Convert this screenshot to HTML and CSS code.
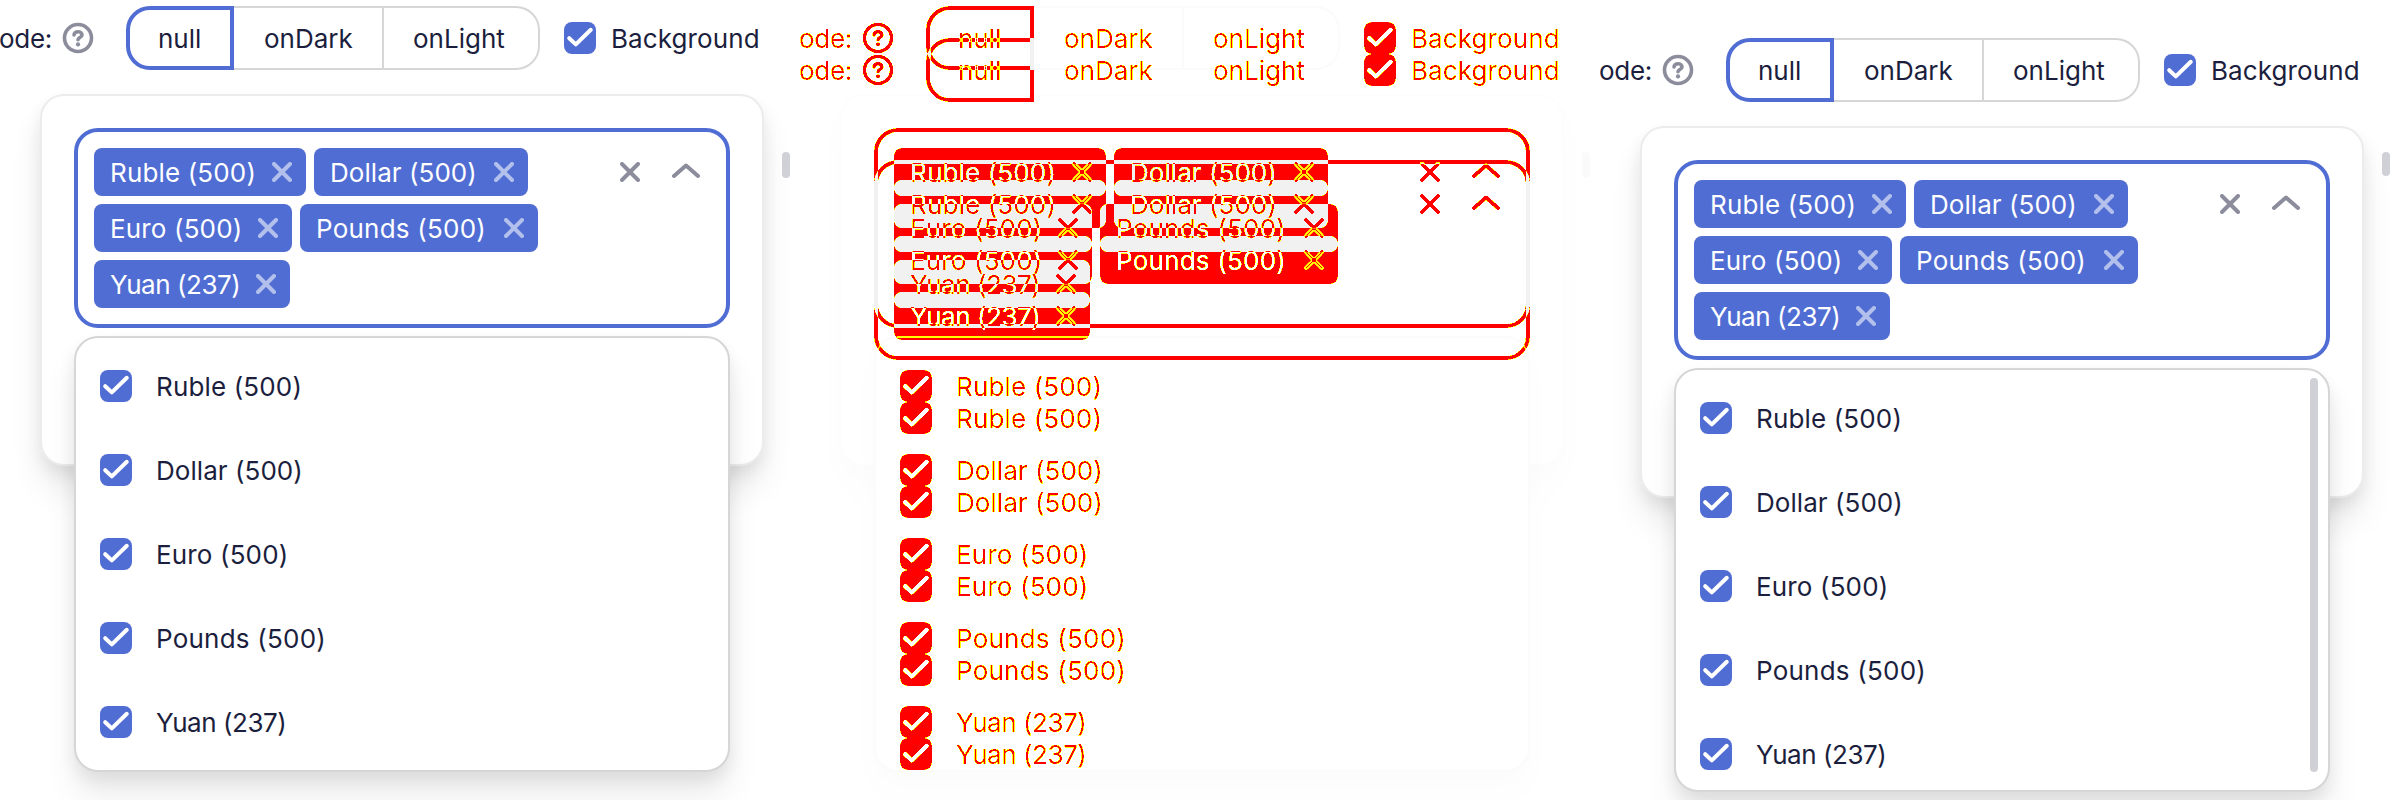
FILE: index.html
```html
<!DOCTYPE html>
<html lang="en">
<head>
<meta charset="utf-8">
<title>Select comparison</title>
<link rel="stylesheet" href="styles.css">
</head>
<body>
<svg class="defs" width="0" height="0" aria-hidden="true">
  <filter id="diff" color-interpolation-filters="sRGB" x="0" y="0" width="100%" height="100%">
    <feColorMatrix in="SourceGraphic" type="matrix" values="0 0 0 0 0  0 0 0 0 0  0 0 0 0 0  .6 .35 .05 0 0" result="level"/>
    <feComponentTransfer in="level" result="mask">
      <feFuncA type="discrete" tableValues="0 0 0 0 1 1 1 1 1 1 1 1 1 1 1 1 1 1 1 1"/>
    </feComponentTransfer>
    <feMorphology in="level" operator="dilate" radius="1" result="peak"/>
    <feComposite in="peak" in2="level" operator="arithmetic" k1="0" k2=".8" k3="-1" k4="0" result="slope"/>
    <feComponentTransfer in="slope" result="edge">
      <feFuncA type="linear" slope="40"/>
    </feComponentTransfer>
    <feComposite in="edge" in2="mask" operator="in" result="edgeMask"/>
    <feFlood flood-color="#ff0000"/>
    <feComposite in2="mask" operator="in" result="red"/>
    <feFlood flood-color="#ffff00"/>
    <feComposite in2="edgeMask" operator="in" result="yellow"/>
    <feMerge>
      <feMergeNode in="red"/>
      <feMergeNode in="yellow"/>
    </feMerge>
  </filter>
</svg>
<main class="comparison">
  <section class="pane" data-view="before"></section>
  <section class="pane">
    <div class="layer ghost" data-view="base"></div>
    <div class="layer delta">
      <div class="layer" data-view="before"></div>
      <div class="layer blend" data-view="after"></div>
    </div>
  </section>
  <section class="pane" data-view="after"></section>
</main>
<script src="app.js"></script>
</body>
</html>
```
FILE: app.js
```js
const options = ['Ruble (500)', 'Dollar (500)', 'Euro (500)', 'Pounds (500)', 'Yuan (237)'];
const names = ['ruble', 'dollar', 'euro', 'pounds', 'yuan'];

const check = '<svg class="check" viewBox="0 0 32 32"><rect width="32" height="32" rx="8"/><path d="M5.2 16.2 11.8 22.4 26.8 7.8"/></svg>';
const cross = '<svg class="cross" viewBox="0 0 20 20"><path d="M2 2 18 18M18 2 2 18"/></svg>';
const chevron = '<svg class="chevron" viewBox="0 0 28 20"><path d="M2 14 14 3.5 26 14"/></svg>';
const help = '<svg class="help" viewBox="0 0 32 32"><circle cx="16" cy="16" r="13.5"/><path d="M12 13c0-2.1 1.8-3.3 4-3.3s4 1.3 4 3.2c0 2.6-4 2.7-4 4.8"/><circle class="dot" cx="16" cy="22.4" r="2.1"/></svg>';

function view(kind) {
  const t = (s) => (kind === 'base' ? '' : s);
  return `
  <div class="screen ${kind}">
    <div class="toolbar">
      <span class="mode">${t('ode:')}</span>${help}
      <div class="segments">
        <div class="segment active"><span>${t('null')}</span></div>
        <div class="segment dark"><span>${t('onDark')}</span></div>
        <div class="segment light"><span>${t('onLight')}</span></div>
      </div>
      ${check}<span class="toggle">${t('Background')}</span>
    </div>
    <div class="card">
      <div class="select">
        <div class="chips">
          ${options.map((o, i) => `<div class="chip ${names[i]}"><span>${t(o)}</span>${cross}</div>`).join('')}
        </div>
        <div class="actions">${cross}${chevron}</div>
        <div class="menu">
          ${options.map((o, i) => `<div class="option ${names[i]}">${check}<span>${t(o)}</span></div>`).join('')}
          <div class="thumb"></div>
        </div>
      </div>
    </div>
    <div class="page-thumb"></div>
  </div>`;
}

document.querySelectorAll('[data-view]').forEach((el) => {
  el.innerHTML = view(el.dataset.view);
});
```
FILE: styles.css
```css
* { box-sizing: border-box; }
body { margin: 0; background: #fff; }
.defs { position: absolute; }
.comparison {
  display: flex;
  width: 2400px;
  height: 800px;
  overflow: hidden;
  font: 400 26px/32px Inter, "Liberation Sans", sans-serif;
  color: #1b1e3d;
}
.pane { position: relative; width: 800px; height: 800px; overflow: hidden; flex: none; }
.layer { position: absolute; inset: 0; overflow: hidden; }
.ghost { filter: grayscale(1) opacity(.1); }
.delta { isolation: isolate; filter: url(#diff); }
.blend { mix-blend-mode: difference; }

.screen { position: relative; width: 800px; height: 800px; padding-top: 6px; background: #fff; overflow: hidden; }
.after { padding-top: 38px; }
svg { display: block; flex: none; fill: none; stroke-linecap: round; stroke-linejoin: round; }
span { white-space: nowrap; padding-top: 2px; }

.toolbar { display: flex; align-items: center; height: 64px; }
.mode { width: 62px; margin-left: -1px; letter-spacing: -.3px; }
.help { width: 32px; height: 32px; margin-left: 1px; stroke: #8c8d9c; stroke-width: 3.6; }
.help .dot { fill: #8c8d9c; stroke: none; }
.segments { display: flex; width: 414px; height: 64px; margin-left: 32px; }
.segment { border: 2px solid #d6d6d6; border-left: 0; display: flex; align-items: center; }
.active { width: 108px; border: 4px solid #506dd3; border-radius: 24px 0 0 24px; padding-left: 28px; }
.dark { width: 150px; padding-left: 30px; }
.light { width: 156px; border-radius: 0 24px 24px 0; padding-left: 29px; }
.check { width: 32px; height: 32px; }
.check rect { fill: #506dd3; }
.check path { stroke: #fff; stroke-width: 4; }
.toolbar .check { margin-left: 24px; }
.toggle { margin-left: 15px; letter-spacing: .1px; }

.card {
  width: 724px;
  height: 372px;
  margin: 24px 0 0 40px;
  padding: 32px;
  border: 2px solid #ececec;
  border-radius: 24px;
  background: #fff;
}
.card, .menu { box-shadow: 0 8px 16px rgba(0, 0, 0, .07), 0 24px 32px rgba(0, 0, 0, .08); }
.select {
  position: relative;
  display: flex;
  justify-content: space-between;
  height: 200px;
  padding: 16px;
  border: 4px solid #506dd3;
  border-radius: 24px;
}
.chips { display: flex; flex-wrap: wrap; align-content: flex-start; gap: 8px; width: 460px; }
.chip {
  display: flex;
  align-items: center;
  justify-content: space-between;
  height: 48px;
  padding: 0 14px 0 16px;
  border-radius: 8px;
  background: #506dd3;
  color: #fff;
}
.ruble { letter-spacing: .15px; }
.dollar { letter-spacing: .05px; }
.euro { letter-spacing: .15px; }
.pounds { letter-spacing: .22px; }
.yuan { letter-spacing: -.45px; }
.chip.ruble { width: 212px; }
.chip.dollar { width: 214px; }
.chip.euro { width: 198px; }
.chip.pounds { width: 238px; }
.chip.yuan { width: 196px; }
.cross { width: 20px; height: 20px; stroke: #8c8d9c; stroke-width: 4; }
.chip .cross { stroke: #b3c0ec; }
.actions { display: flex; gap: 32px; height: 48px; align-items: center; padding-right: 10px; }
.chevron { width: 28px; height: 20px; stroke: #8c8d9c; stroke-width: 4; }

.menu {
  position: absolute;
  top: 204px;
  left: -4px;
  width: 656px;
  height: 436px;
  padding: 6px 24px;
  border: 2px solid #d6d6d6;
  border-radius: 24px;
  background: #fff;
  overflow: hidden;
}
.after .menu { height: 424px; }
.option { display: flex; align-items: center; gap: 24px; height: 84px; }
.thumb { display: none; }
.after .thumb {
  display: block;
  position: absolute;
  top: 8px;
  right: 10px;
  width: 8px;
  height: 394px;
  border-radius: 4px;
  background: #d0d0d7;
}
.page-thumb { position: absolute; left: 782px; top: 152px; width: 8px; height: 26px; border-radius: 4px; background: #d0d0d7; }
.after .page-thumb { height: 24px; }
```
